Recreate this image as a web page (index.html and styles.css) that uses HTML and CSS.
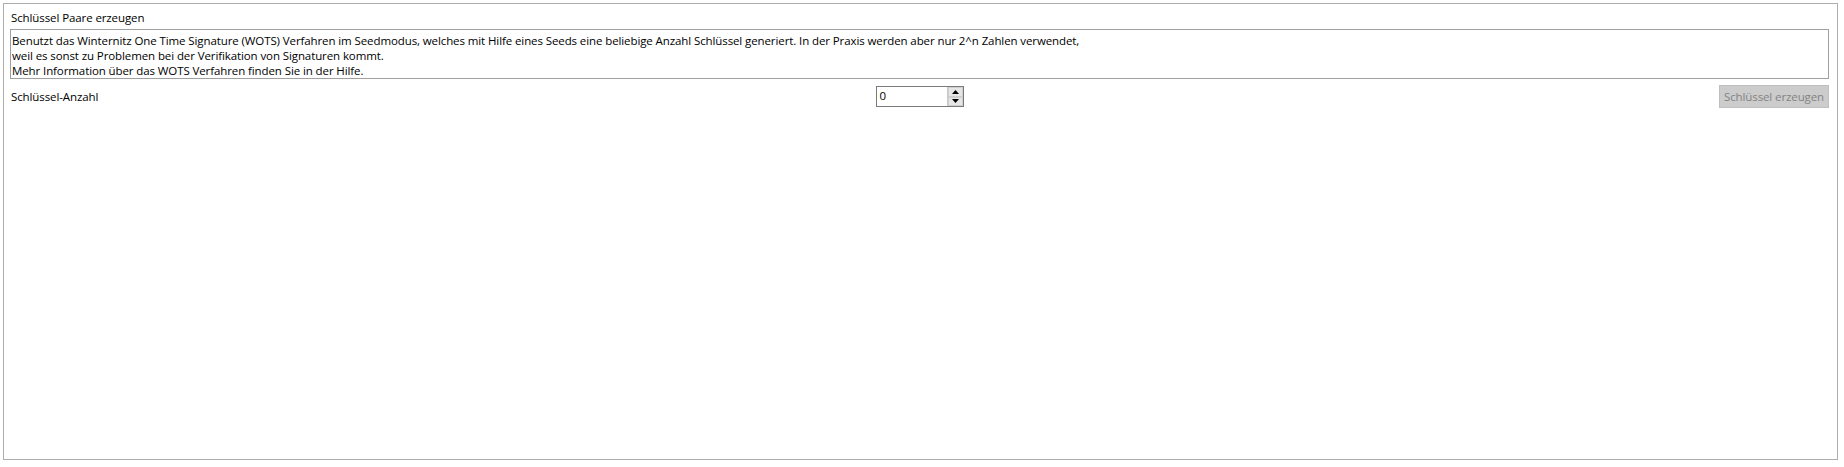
FILE: index.html
```html
<!DOCTYPE html>
<html lang="de">
<head>
<meta charset="utf-8">
<title>Schlüssel Paare erzeugen</title>
<link rel="stylesheet" href="styles.css">
</head>
<body>
<div class="panel">
  <div class="title">Schlüssel Paare erzeugen</div>
  <div class="desc">
    <div>Benutzt das Winternitz One Time Signature (WOTS) Verfahren im Seedmodus, welches mit Hilfe eines Seeds eine beliebige Anzahl Schlüssel generiert. In der Praxis werden aber nur 2^n Zahlen verwendet,</div>
    <div>weil es sonst zu Problemen bei der Verifikation von Signaturen kommt.</div>
    <div>Mehr Information über das WOTS Verfahren finden Sie in der Hilfe.</div>
  </div>
  <div class="row">
    <div class="label">Schlüssel-Anzahl</div>
    <div class="spinner">
      <div class="value">0</div>
      <div class="arrows">
        <div class="arrow">
          <svg width="7" height="4" viewBox="0 0 7 4"><path d="M0 4 L3.5 0 L7 4 Z" fill="#000"/></svg>
        </div>
        <div class="arrow">
          <svg width="7" height="4" viewBox="0 0 7 4"><path d="M0 0 L7 0 L3.5 4 Z" fill="#000"/></svg>
        </div>
      </div>
    </div>
    <button class="btn" disabled>Schlüssel erzeugen</button>
  </div>
</div>
</body>
</html>
```
FILE: styles.css
```css
html, body {
  margin: 0;
  padding: 0;
  background: #ffffff;
}
body {
  font-family: "Segoe UI", "Open Sans", "Noto Sans", sans-serif;
  font-size: 11.5px;
  letter-spacing: -0.1px;
  color: #000;
}
.panel {
  margin: 3px 0 0 3px;
  width: 1835px;
  height: 457px;
  box-sizing: border-box;
  border: 1px solid #adadad;
  padding: 6px 8px 0 6px;
  display: flex;
  flex-direction: column;
}
.title {
  line-height: 15px;
  height: 15px;
  margin-left: 1px;
}
.desc {
  margin-top: 4px;
  height: 50px;
  box-sizing: border-box;
  border: 1px solid #a0a0a0;
  padding: 3px 1px 0 1px;
  line-height: 15px;
  white-space: nowrap;
}
.row {
  margin-top: 6px;
  display: grid;
  grid-template-columns: 1fr auto 1fr;
  align-items: start;
}
.label {
  margin-left: 1px;
  line-height: 15px;
  padding-top: 4px;
}
.spinner {
  margin-top: 1px;
  width: 88px;
  height: 21px;
  box-sizing: border-box;
  border: 1px solid #7a7a7a;
  display: flex;
}
.value {
  flex: 1;
  padding-left: 3px;
  line-height: 18px;
}
.arrows {
  width: 15px;
  display: flex;
  flex-direction: column;
  border-left: 1px solid #c8c8c8;
}
.arrow {
  flex: 1;
  display: flex;
  align-items: center;
  justify-content: center;
  background: #e6e6e6;
  border: 1px solid #cfcfcf;
}
.btn {
  justify-self: end;
  width: 110px;
  height: 23px;
  margin: 0;
  font: inherit;
  letter-spacing: inherit;
  color: #838383;
  background: #cccccc;
  border: 1px solid #bfbfbf;
  padding: 0;
}
```
